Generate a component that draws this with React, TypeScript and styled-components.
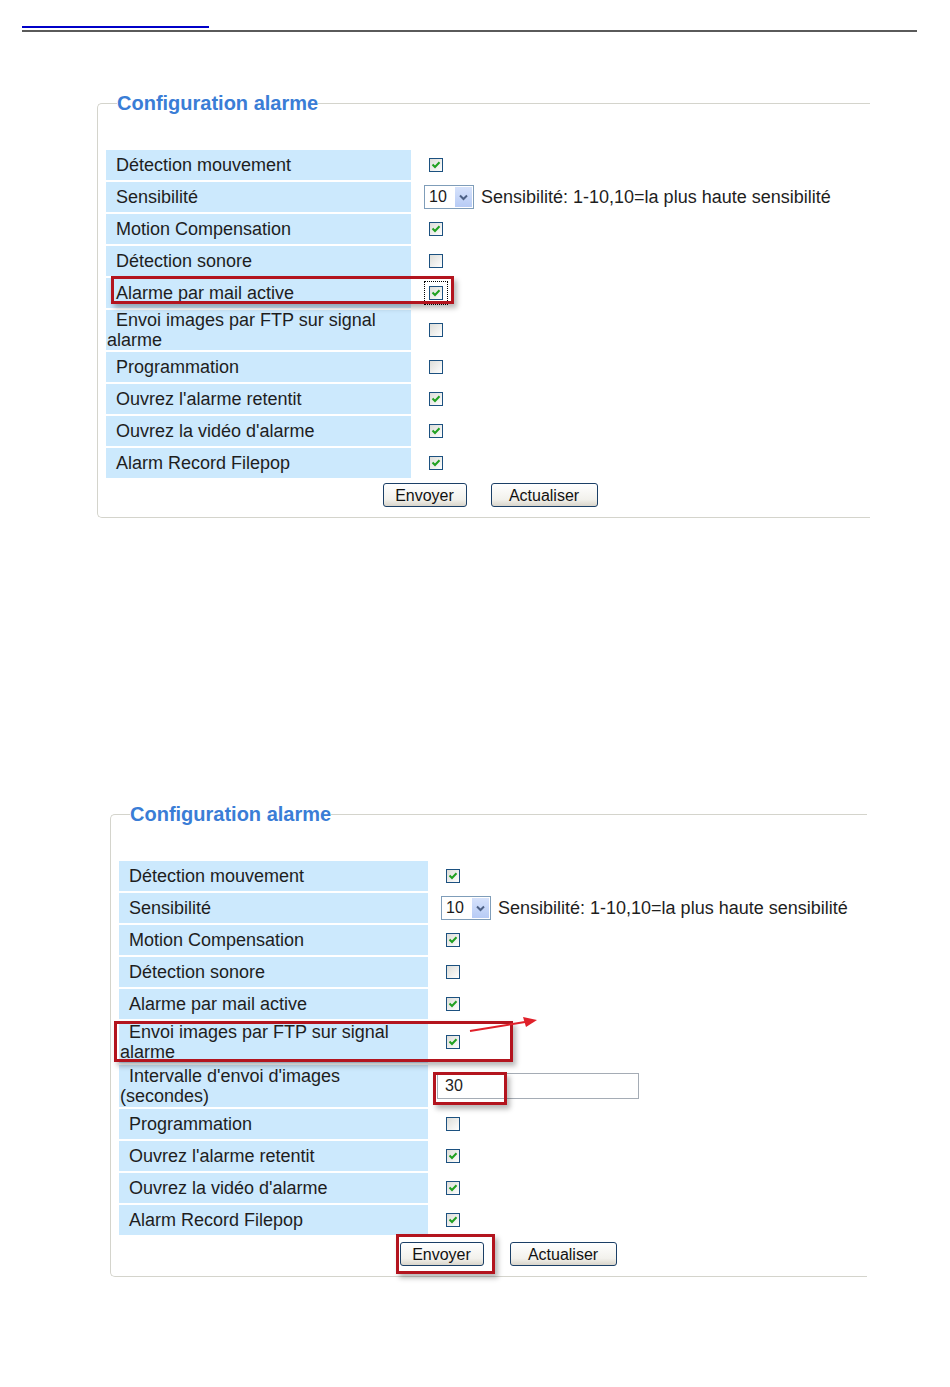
import React from 'react';
import styled, { createGlobalStyle } from 'styled-components';

const GlobalStyle = createGlobalStyle`
  body {
    margin: 0;
    background: #fff;
    font-family: "Liberation Sans", Arial, sans-serif;
    color: #1e1e1e;
  }
`;

const Page = styled.div`
  width: 950px;
  height: 1387px;
  padding-top: 26px;
  box-sizing: border-box;
`;

const HeaderRule = styled.div`
  margin: 0 33px 0 22px;
`;

const BlueLine = styled.div`
  width: 187px;
  height: 2px;
  background: #0000c8;
`;

const GrayLine = styled.div`
  margin-top: 2px;
  height: 2px;
  background: #5a5a5a;
`;

const Section = styled.div<{ $left: number; $top: number; $width: number }>`
  position: relative;
  margin-left: ${(p) => p.$left}px;
  margin-top: ${(p) => p.$top}px;
  width: ${(p) => p.$width}px;
`;

const Fieldset = styled.fieldset`
  margin: 0;
  padding: 0 0 10px 8px;
  border: 1px solid #d4d4cc;
  border-right: none;
  border-radius: 5px 0 0 5px;
  min-inline-size: 0;
`;

const Legend = styled.legend`
  margin-left: 11px;
  padding: 0;
  font-size: 20px;
  line-height: 23px;
  font-weight: bold;
  color: #3a7dd6;
`;

const Rows = styled.div`
  margin-top: 35px;
  display: flex;
  flex-direction: column;
  gap: 2px;
`;

const Row = styled.div`
  display: flex;
  align-items: center;
`;

const Label = styled.div<{ $width: number; $height: number }>`
  width: ${(p) => p.$width}px;
  min-height: ${(p) => p.$height}px;
  box-sizing: border-box;
  padding-left: 1px;
  text-indent: 9px;
  display: flex;
  align-items: center;
  background: #cce9fd;
  font-size: 18px;
  line-height: 20px;
`;

const Value = styled.div`
  display: flex;
  align-items: center;
  padding-left: 13px;
  font-size: 18px;
`;

const BoxWrap = styled.span<{ $focused?: boolean }>`
  display: inline-flex;
  margin-left: 5px;
  outline: ${(p) => (p.$focused ? '1px dotted #000' : 'none')};
  outline-offset: 4px;
`;

const Check = ({ on, focused }: { on?: boolean; focused?: boolean }) => (
  <BoxWrap $focused={focused}>
    <svg width="14" height="14" viewBox="0 0 14 14">
      <defs>
        <linearGradient id="cbg" x1="0" y1="0" x2="1" y2="1">
          <stop offset="0" stopColor="#dcdcd7" />
          <stop offset="1" stopColor="#ffffff" />
        </linearGradient>
      </defs>
      <rect x="0.5" y="0.5" width="13" height="13" fill="url(#cbg)" stroke="#1c5180" />
      {on && <path d="M3.5 6.5 L6 9 L10.5 4.2" fill="none" stroke="#21a121" strokeWidth="2" />}
    </svg>
  </BoxWrap>
);

const Select = styled.div`
  width: 50px;
  height: 24px;
  box-sizing: border-box;
  border: 1px solid #7f9db9;
  display: flex;
  align-items: stretch;
  background: #fff;
`;

const SelectText = styled.span`
  flex: 1;
  padding-left: 4px;
  font-size: 16px;
  line-height: 22px;
  color: #1a1a1a;
`;

const SelectArrow = styled.span`
  width: 17px;
  margin: 1px;
  display: flex;
  align-items: center;
  justify-content: center;
  background: linear-gradient(#d6e2fb, #b7cbf5);
`;

const Hint = styled.span`
  margin-left: 7px;
  font-size: 18px;
`;

const TextInput = styled.div`
  margin-left: -4px;
  width: 202px;
  height: 26px;
  box-sizing: border-box;
  border: 1px solid #a5acb5;
  padding-left: 7px;
  font-size: 16px;
  line-height: 24px;
`;

const Buttons = styled.div<{ $shift: number; $gap: number; $top: number }>`
  display: flex;
  justify-content: center;
  gap: ${(p) => p.$gap}px;
  margin-top: ${(p) => p.$top}px;
  padding-left: ${(p) => p.$shift}px;
`;

const Button = styled.button<{ $width: number }>`
  width: ${(p) => p.$width}px;
  height: 24px;
  padding: 1px 0 0;
  border: 1px solid #1b3f66;
  border-radius: 3px;
  background: linear-gradient(#ffffff, #f2f1ec 70%, #d9d5cb);
  font-family: "Liberation Sans", Arial, sans-serif;
  font-size: 16px;
  color: #111;
`;

const Mark = styled.div<{ $x: number; $y: number; $w: number; $h: number }>`
  position: absolute;
  left: ${(p) => p.$x}px;
  top: ${(p) => p.$y}px;
  width: ${(p) => p.$w}px;
  height: ${(p) => p.$h}px;
  box-sizing: border-box;
  border: 3px solid #b3141e;
  box-shadow: 3px 4px 5px rgba(0, 0, 0, 0.28);
  pointer-events: none;
`;

const Arrow = styled.svg`
  position: absolute;
  left: 355px;
  top: 205px;
`;

const Chevron = () => (
  <svg width="9" height="7" viewBox="0 0 9 7">
    <path d="M1 1.5 L4.5 5 L8 1.5" fill="none" stroke="#4d6185" strokeWidth="2" />
  </svg>
);

const Sensitivity = () => (
  <>
    <Select>
      <SelectText>10</SelectText>
      <SelectArrow>
        <Chevron />
      </SelectArrow>
    </Select>
    <Hint>Sensibilité: 1-10,10=la plus haute sensibilité</Hint>
  </>
);

type Item = { label: React.ReactNode; tall?: boolean; value: React.ReactNode };

const Panel = ({
  items,
  cell,
  tallHeight,
  shift,
  gap,
  buttonsTop,
}: {
  items: Item[];
  cell: number;
  tallHeight: number;
  shift: number;
  gap: number;
  buttonsTop: number;
}) => (
  <Fieldset>
    <Legend>Configuration alarme</Legend>
    <Rows>
      {items.map((it, i) => (
        <Row key={i}>
          <Label $width={cell} $height={it.tall ? tallHeight : 30}>
            <span>{it.label}</span>
          </Label>
          <Value>{it.value}</Value>
        </Row>
      ))}
    </Rows>
    <Buttons $shift={shift} $gap={gap} $top={buttonsTop}>
      <Button $width={84}>Envoyer</Button>
      <Button $width={107}>Actualiser</Button>
    </Buttons>
  </Fieldset>
);

const ftpLabel = (
  <>
    Envoi images par FTP sur signal
    <br />
    alarme
  </>
);

const firstItems: Item[] = [
  { label: 'Détection mouvement', value: <Check on /> },
  { label: 'Sensibilité', value: <Sensitivity /> },
  { label: 'Motion Compensation', value: <Check on /> },
  { label: 'Détection sonore', value: <Check /> },
  { label: 'Alarme par mail active', value: <Check on focused /> },
  { label: ftpLabel, tall: true, value: <Check /> },
  { label: 'Programmation', value: <Check /> },
  { label: "Ouvrez l'alarme retentit", value: <Check on /> },
  { label: "Ouvrez la vidéo d'alarme", value: <Check on /> },
  { label: 'Alarm Record Filepop', value: <Check on /> },
];

const secondItems: Item[] = [
  { label: 'Détection mouvement', value: <Check on /> },
  { label: 'Sensibilité', value: <Sensitivity /> },
  { label: 'Motion Compensation', value: <Check on /> },
  { label: 'Détection sonore', value: <Check /> },
  { label: 'Alarme par mail active', value: <Check on /> },
  { label: ftpLabel, tall: true, value: <Check on /> },
  {
    label: (
      <>
        Intervalle d'envoi d'images
        <br />
        (secondes)
      </>
    ),
    tall: true,
    value: <TextInput>30</TextInput>,
  },
  { label: 'Programmation', value: <Check /> },
  { label: "Ouvrez l'alarme retentit", value: <Check on /> },
  { label: "Ouvrez la vidéo d'alarme", value: <Check on /> },
  { label: 'Alarm Record Filepop', value: <Check on /> },
];

export default function App() {
  return (
    <Page>
      <GlobalStyle />
      <HeaderRule>
        <BlueLine />
        <GrayLine />
      </HeaderRule>

      <Section $left={97} $top={60} $width={773}>
        <Panel items={firstItems} cell={305} tallHeight={40} shift={4} gap={24} buttonsTop={5} />
        <Mark $x={14} $y={184} $w={343} $h={28} />
      </Section>

      <Section $left={110} $top={285} $width={757}>
        <Panel items={secondItems} cell={309} tallHeight={42} shift={30} gap={26} buttonsTop={7} />
        <Mark $x={4} $y={218} $w={399} $h={41} />
        <Mark $x={323} $y={269} $w={74} $h={33} />
        <Mark $x={286} $y={431} $w={99} $h={40} />
        <Arrow width="80" height="30" viewBox="0 0 80 30">
          <path d="M5 23 L60 14" stroke="#e0202a" strokeWidth="2" fill="none" />
          <path d="M72 12 L58 9 L61 19 Z" fill="#e0202a" />
        </Arrow>
      </Section>
    </Page>
  );
}
